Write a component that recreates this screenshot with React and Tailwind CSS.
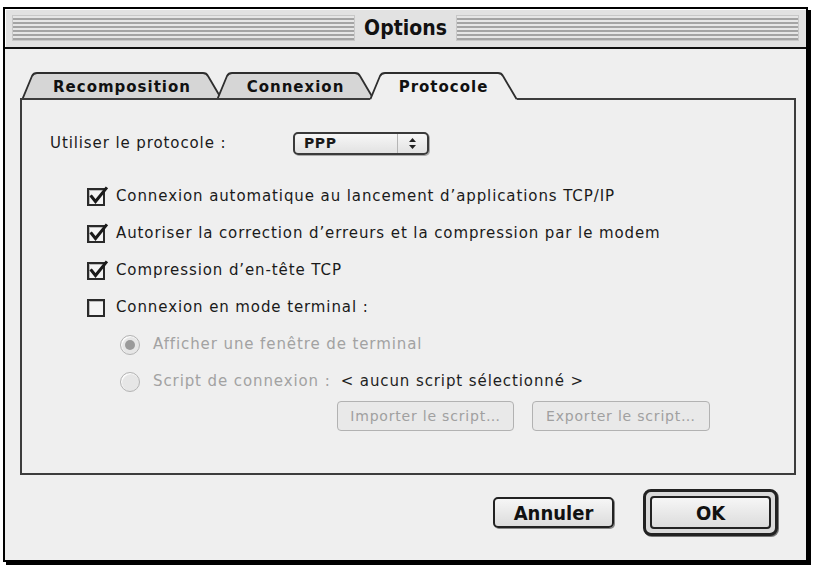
import React from "react";

const body = "font-['DejaVu_Sans','Liberation_Sans',sans-serif]";
const heavy = "font-['DejaVu_Sans_Condensed','Liberation_Sans_Narrow','Liberation_Sans',sans-serif] font-bold";

function Tab({ label, width, selected, className = "" }) {
  const w = width;
  const h = 27;
  const d = `M0.5,${h} L10,4 Q11.5,1 15,1 L${w - 19},1 Q${w - 15.5},1 ${w - 14},4 L${w - 0.5},${h}`;
  return (
    <div
      className={`relative flex items-center justify-center h-[27px] ${selected ? "z-20 -mb-[2px] h-[29px]" : "z-0"} ${className}`}
      style={{ width: w }}
    >
      <svg className="absolute left-0 top-0" width={w} height={selected ? 29 : 27} viewBox={`0 0 ${w} ${selected ? 29 : 27}`}>
        <path d={selected ? d + ` L${w},29 L0,29 Z` : d + " Z"} fill={selected ? "#efefef" : "#d6d6d6"} stroke="none" />
        <path d={d} fill="none" stroke="#2e2e2e" strokeWidth="1.8" />
      </svg>
      <span className={`relative ${body} font-bold text-[15px] tracking-[1px] text-[#111] pt-[3px] ${selected ? "pb-[2px]" : ""}`}>
        {label}
      </span>
    </div>
  );
}

function Check({ checked, label }) {
  return (
    <div className="flex items-center h-[37px]">
      <div className="relative w-[18px] h-[18px] border-[2.5px] border-[#2a2a2a] bg-[#f4f4f4] shadow-[inset_1px_1px_0_#bbb]">
        {checked && (
          <svg className="absolute -left-[1px] -top-[5px]" width="22" height="22" viewBox="0 0 22 22">
            <path d="M3.5,11.5 L7.5,16.5 L18,3.5" fill="none" stroke="#1a1a1a" strokeWidth="3" strokeLinecap="square" />
          </svg>
        )}
      </div>
      <span className={`ml-[11px] ${body} text-[15px] tracking-[0.9px] text-[#1a1a1a]`}>{label}</span>
    </div>
  );
}

function Radio({ on, children }) {
  return (
    <div className="flex items-center h-[37px]">
      <div className="w-[20px] h-[20px] rounded-full border-[1.5px] border-[#b4b4b4] bg-[#e6e6e6] flex items-center justify-center shadow-[inset_1px_1px_1px_#fff]">
        {on && <div className="w-[10px] h-[10px] rounded-full bg-[#9a9a9a]" />}
      </div>
      <div className={`ml-[13px] ${body} text-[15px] tracking-[0.9px] text-[#a2a2a2] flex items-center`}>{children}</div>
    </div>
  );
}

export default function App() {
  return (
    <div className="w-[815px] h-[568px] bg-white overflow-hidden">
      <div className="ml-[3px] mt-[7px] w-[805px] h-[555px] border-2 border-black shadow-[3px_3px_0_#000] flex flex-col bg-[#efefef]">
        {/* title bar */}
        <div className="h-[40px] bg-[#e2e2e2] px-[7px] py-[6px] flex items-stretch border-b-2 border-[#111] shadow-[inset_1px_1px_0_#fff]">
          <div className="flex-1 border border-[#c8c8c8] bg-[repeating-linear-gradient(to_bottom,#e6e6e6_0px,#e6e6e6_2px,#a4a4a4_2px,#a4a4a4_4px)]" />
          <div className={`px-[9px] flex items-center ${heavy} text-[21px] leading-none text-[#111]`}>Options</div>
          <div className="flex-1 border border-[#c8c8c8] bg-[repeating-linear-gradient(to_bottom,#e6e6e6_0px,#e6e6e6_2px,#a4a4a4_2px,#a4a4a4_4px)]" />
        </div>

        {/* content */}
        <div className="flex-1 pt-[23px] pl-[15px]">
          <div className="flex items-end ml-[2px]">
            <Tab label="Recomposition" width={200} />
            <Tab label="Connexion" width={157} className="-ml-[5px]" />
            <Tab label="Protocole" width={147} selected className="-ml-[4px]" />
          </div>

          <div className="relative z-10 w-[776px] h-[377px] border-2 border-[#3c3c3c] bg-[#efefef] -mt-[1px]">
            <div className="flex items-center mt-[32px] pl-[28px]">
              <span className={`w-[243px] ${body} text-[15px] tracking-[0.9px] text-[#1a1a1a]`}>Utiliser le protocole :</span>
              <div className="w-[136px] h-[23px] rounded-[5px] border-2 border-[#3a3a3a] bg-[linear-gradient(#f7f7f7,#e2e2e2)] flex items-stretch shadow-[1px_1px_0_#aaa]">
                <span className={`flex-1 pl-[9px] flex items-center ${body} text-[14px] font-bold tracking-[0.6px] text-[#1a1a1a]`}>PPP</span>
                <div className="w-[30px] border-l border-[#b5b5b5] flex items-center justify-center">
                  <svg width="9" height="13" viewBox="0 0 9 13">
                    <path d="M4.5,1 L8,5 L1,5 Z" fill="#222" />
                    <path d="M4.5,12 L8,8 L1,8 Z" fill="#222" />
                  </svg>
                </div>
              </div>
            </div>

            <div className="mt-[23px] pl-[65px]">
              <Check checked label="Connexion automatique au lancement d’applications TCP/IP" />
              <Check checked label="Autoriser la correction d’erreurs et la compression par le modem" />
              <Check checked label="Compression d’en-tête TCP" />
              <Check label="Connexion en mode terminal :" />
            </div>

            <div className="pl-[98px]">
              <Radio on>Afficher une fenêtre de terminal</Radio>
              <Radio>
                <span>Script de connexion :</span>
                <span className="ml-[10px] text-[#1e1e1e]">&lt; aucun script sélectionné &gt;</span>
              </Radio>
            </div>

            <div className="flex gap-[18px] pl-[315px] mt-[1px]">
              <div className={`w-[177px] h-[30px] rounded-[4px] border-[1.5px] border-[#b2b2b2] bg-[#e9e9e9] flex items-center justify-center ${body} text-[14px] tracking-[0.8px] text-[#a0a0a0]`}>
                Importer le script…
              </div>
              <div className={`w-[178px] h-[30px] rounded-[4px] border-[1.5px] border-[#b2b2b2] bg-[#e9e9e9] flex items-center justify-center ${body} text-[14px] tracking-[0.8px] text-[#a0a0a0]`}>
                Exporter le script…
              </div>
            </div>
          </div>

          <div className="flex items-center justify-end gap-[29px] pr-[28px] mt-[14px]">
            <div className={`w-[121px] h-[31px] rounded-[5px] border-2 border-[#222] bg-[linear-gradient(#f6f6f6,#dcdcdc)] shadow-[1px_1px_0_#888] flex items-center justify-center ${heavy} text-[20px] text-[#111]`}>
              Annuler
            </div>
            <div className="w-[135px] h-[47px] rounded-[8px] border-[3px] border-[#222] bg-[#dadada] p-[4px] shadow-[1px_1px_0_#777]">
              <div className={`w-full h-full rounded-[4px] border-2 border-[#222] bg-[linear-gradient(#f6f6f6,#dcdcdc)] flex items-center justify-center ${heavy} text-[20px] text-[#111]`}>
                OK
              </div>
            </div>
          </div>
        </div>
      </div>
    </div>
  );
}
